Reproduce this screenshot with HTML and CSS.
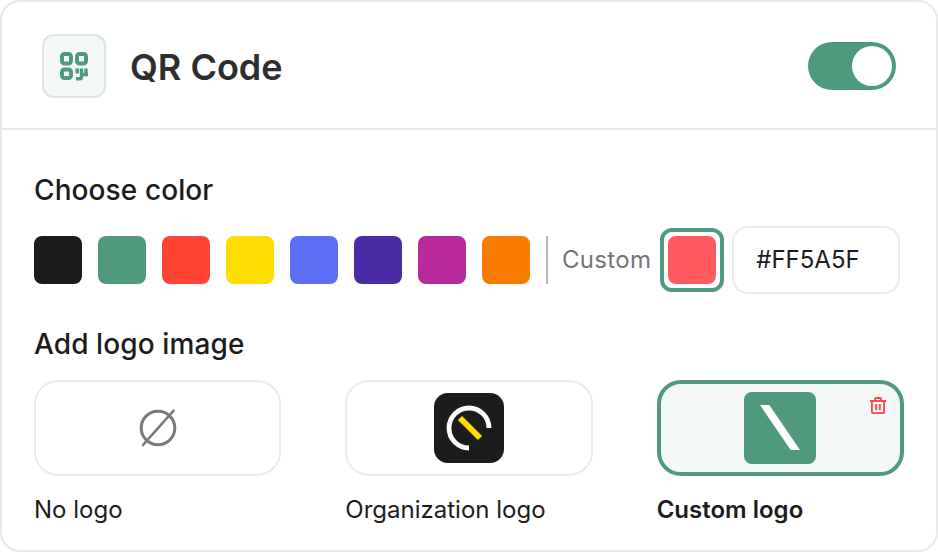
FILE: index.html
```html
<!DOCTYPE html>
<html>
<head>
    <title>QR Code</title>
    <link rel="stylesheet" href="styles.css">
</head>
<body>

<div class="card">
    <!-- Header -->
    <div class="card-header">
        <div class="header-icon">
            <svg width="30" height="30" viewBox="0 0 30 30" fill="none" stroke="#4F9A7C" stroke-width="4">
                <rect x="3" y="3" width="9" height="9.500" rx="2.500"/>
                <rect x="18" y="3" width="9" height="9.500" rx="2.500"/>
                <rect x="3" y="18.500" width="9" height="8.500" rx="2.500"/>
                <path d="M18.200 17.500v5M22.500 17.500v8.500q0 1.800-1.800 1.800h-3.700M27 17.500v6.500M22.500 23.500H29" stroke-width="3.400"/>
            </svg>
        </div>
        <div class="header-title">QR Code</div>
        <div class="toggle"><div class="toggle-knob"></div></div>
    </div>

    <div class="card-body">
        <!-- Color -->
        <div class="section-title">Choose color</div>
        <div class="color-row">
            <div class="swatch black"></div>
            <div class="swatch green"></div>
            <div class="swatch red"></div>
            <div class="swatch yellow"></div>
            <div class="swatch blue"></div>
            <div class="swatch indigo"></div>
            <div class="swatch magenta"></div>
            <div class="swatch orange"></div>
            <div class="row-divider"></div>
            <div class="custom-label">Custom</div>
            <div class="swatch-ring"><div class="swatch coral"></div></div>
            <div class="hex-input">#FF5A5F</div>
        </div>

        <!-- Logo -->
        <div class="section-title logo-title">Add logo image</div>
        <div class="logo-row">
            <div class="logo-option">
                <div class="logo-box">
                    <svg width="40" height="40" viewBox="0 0 40 40" fill="none" stroke="#7A7A7A" stroke-width="3">
                        <circle cx="20" cy="20" r="16.800"/>
                        <path d="M35.600 2.700 5 37" stroke-linecap="round" stroke-width="2.600"/>
                    </svg>
                </div>
                <div class="logo-label">No logo</div>
            </div>
            <div class="logo-option">
                <div class="logo-box">
                    <svg width="70" height="70" viewBox="0 0 70 70">
                        <rect width="70" height="70" rx="14" fill="#1C1C1C"/>
                        <path d="M55 35A20 20 0 1 0 35 55" fill="none" stroke="#fff" stroke-width="4.800"/>
                        <path d="M26 25 46 45" stroke="#FFDD00" stroke-width="6"/>
                    </svg>
                </div>
                <div class="logo-label">Organization logo</div>
            </div>
            <div class="logo-option">
                <div class="logo-box selected">
                    <svg width="72" height="72" viewBox="0 0 72 72">
                        <rect width="72" height="72" rx="8" fill="#4F9A7C"/>
                        <path d="M16 13h9.300L56 58h-9.300z" fill="#fff"/>
                    </svg>
                    <svg class="trash" width="16" height="17" viewBox="0 0 16 17" fill="none" stroke="#FF4545" stroke-width="1.800">
                        <path d="M0 4h16M1.900 4v11.100q0 1 1 1h10.200q1 0 1-1V4M5 4V2q0-1 1-1h4q1 0 1 1v2M6.200 7v6M9.800 7v6"/>
                    </svg>
                </div>
                <div class="logo-label bold">Custom logo</div>
            </div>
        </div>
    </div>
</div>

</body>
</html>
```
FILE: styles.css
```css
html, body {
    margin: 0;
    padding: 0;
}

body {
    font-family: Inter, "Liberation Sans", sans-serif;
    color: #1c1c1c;
    background-color: white;
}

.card {
    box-sizing: border-box;
    width: 938px;
    height: 552px;
    border: 2px solid #e8e8e8;
    border-radius: 20px;
    overflow: hidden;
}

.card-header {
    display: flex;
    align-items: center;
    box-sizing: border-box;
    height: 128px;
    padding: 2px 40px 0;
    border-bottom: 2px solid #e8e8e8;
}

.header-icon {
    display: flex;
    align-items: center;
    justify-content: center;
    box-sizing: border-box;
    width: 64px;
    height: 64px;
    background-color: #f3f7f5;
    border: 2px solid #dbe6e1;
    border-radius: 12px;
}

.header-title {
    margin: 2px 0 0 24px;
    font-size: 36px;
    font-weight: 600;
    color: #2e2e2e;
}

.toggle {
    display: flex;
    align-items: center;
    justify-content: flex-end;
    box-sizing: border-box;
    width: 88px;
    height: 48px;
    margin-left: auto;
    padding-right: 4px;
    background-color: #4f9a7c;
    border-radius: 24px;
}

.toggle-knob {
    width: 40px;
    height: 40px;
    background-color: white;
    border-radius: 50%;
}

.card-body {
    padding: 44px 0 0 32px;
}

.section-title {
    height: 32px;
    font-size: 28px;
    font-weight: 450;
    letter-spacing: 0.1px;
    line-height: 32px;
}

.color-row {
    display: flex;
    align-items: center;
    height: 68px;
    margin-top: 20px;
}

.swatch {
    flex: none;
    width: 48px;
    height: 48px;
    margin-right: 16px;
    border-radius: 8px;
}

.black { background-color: #1c1c1c; }
.green { background-color: #4f9a7c; }
.red { background-color: #ff4436; }
.yellow { background-color: #ffdd00; }
.blue { background-color: #5a6ff5; }
.indigo { background-color: #4c2ba6; }
.magenta { background-color: #b82a9c; }
.orange { background-color: #f97b00; }

.row-divider {
    width: 2px;
    height: 48px;
    background-color: #b5b5b5;
}

.custom-label {
    margin: 0 0 2px 14px;
    font-size: 24px;
    letter-spacing: 0.3px;
    color: #757575;
}

.swatch-ring {
    display: flex;
    align-items: center;
    justify-content: center;
    box-sizing: border-box;
    width: 64px;
    height: 64px;
    margin-left: 9px;
    border: 4px solid #4f9a7c;
    border-radius: 12px;
}

.swatch.coral {
    margin: 0;
    background-color: #ff5a5f;
}

.hex-input {
    box-sizing: border-box;
    width: 168px;
    height: 68px;
    margin-left: 8px;
    padding-left: 22px;
    border: 2px solid #ebebeb;
    border-radius: 16px;
    font-size: 24px;
    line-height: 64px;
}

.logo-title {
    margin-top: 34px;
}

.logo-row {
    display: grid;
    grid-template-columns: repeat(3, 1fr);
    gap: 64px;
    width: 870px;
    margin-top: 20px;
}

.logo-box {
    position: relative;
    display: flex;
    align-items: center;
    justify-content: center;
    box-sizing: border-box;
    height: 96px;
    border: 2px solid #ebebeb;
    border-radius: 24px;
}

.logo-box.selected {
    background-color: #f3f7f5;
    border: 4px solid #4f9a7c;
}

.trash {
    position: absolute;
    top: 13px;
    right: 14px;
}

.logo-label {
    margin-top: 20px;
    font-size: 24px;
    line-height: 28px;
}

.logo-label.bold {
    font-weight: 600;
}
```
